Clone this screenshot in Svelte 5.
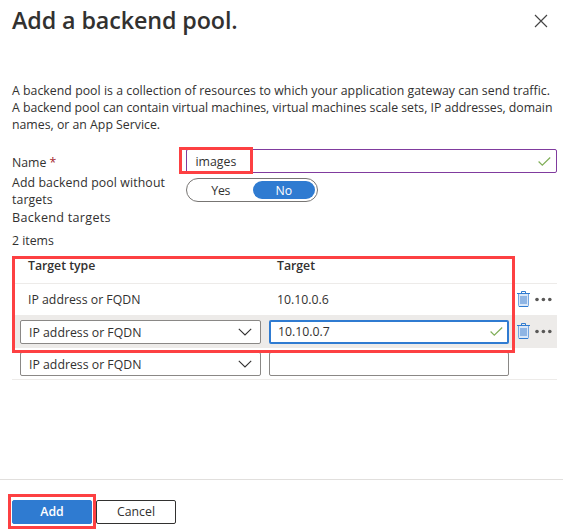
<script>
  const rows = [
    { target: '10.10.0.6', mode: 'read' },
    { target: '10.10.0.7', mode: 'active' },
    { target: '', mode: 'new' }
  ];
</script>

{#snippet check()}
  <svg class="check" width="13" height="9" viewBox="0 0 13 9"><path d="M.6 4.5 4.3 8.1 12.2.5" fill="none" stroke="#7fae57" stroke-width="1.2" /></svg>
{/snippet}

{#snippet actions()}
  <span class="actions">
    <svg width="13" height="17" viewBox="0 0 13 17">
      <path d="M1.5 3v11.5q0 1 1 1h8q1 0 1-1V3" fill="#d9e7f8" stroke="#73a5e0" stroke-width="1" />
      <path d="M3 5h7v8H3z" fill="#8fb5e4" />
      <path d="M0 2.5h13M4.5 2V.5h4V2M2 15.5h9" fill="none" stroke="#2f7bd1" />
    </svg>
    <svg width="17" height="5" viewBox="0 0 17 5" fill="#595857"><circle cx="2" cy="2.5" r="1.8" /><circle cx="8.4" cy="2.5" r="1.8" /><circle cx="14.8" cy="2.5" r="1.8" /></svg>
  </span>
{/snippet}

<div class="panel">
  <header>
    <h1>Add a backend pool.</h1>
    <svg width="14" height="14" viewBox="0 0 14 14"><path d="M1 1l12 12M13 1 1 13" stroke="#444" stroke-width="1.15" /></svg>
  </header>

  <div class="desc">
    <div class="d1">A backend pool is a collection of resources to which your application gateway can send traffic.</div>
    <div class="d2">A backend pool can contain virtual machines, virtual machines scale sets, IP addresses, domain</div>
    <div class="d3">names, or an App Service.</div>
  </div>

  <div class="form">
    <div class="labels">
      <div class="name">Name <b>*</b></div>
      <div class="without">Add backend pool without<br />targets</div>
      <div class="bt">Backend targets</div>
    </div>
    <div class="controls">
      <div class="field"><span class="img">images</span>{@render check()}<i class="mark mark-name"></i></div>
      <div class="toggle"><span class="yes">Yes</span><span class="on">No</span></div>
    </div>
  </div>
  <div class="count">2 items</div>

  <div class="table">
    <div class="row head"><span class="c1 tt">Target type</span><span class="th">Target</span></div>
    {#each rows as row}
      <div class="row {row.mode}">
        {#if row.mode === 'read'}
          <span class="c1 ip">IP address or FQDN</span><span class="c2 num">{row.target}</span>
        {:else}
          <div class="select"><span class="ip">IP address or FQDN</span><svg width="14" height="8" viewBox="0 0 14 8"><path d="M.8.8 7 7 13.2.8" fill="none" stroke="#323130" stroke-width="1.1" /></svg></div>
          <div class="input"><span class="num">{row.target}</span>{#if row.mode === 'active'}{@render check()}{/if}</div>
        {/if}
        {#if row.mode !== 'new'}{@render actions()}{/if}
      </div>
    {/each}
    <i class="mark mark-table"></i>
  </div>

  <footer>
    <div class="btn primary"><span>Add</span><i class="mark mark-add"></i></div>
    <div class="btn"><span class="cancel">Cancel</span></div>
  </footer>
</div>

<style>
  :global(body) { margin: 0; background: #fff; }
  .panel {
    width: 563px; height: 529px; box-sizing: border-box; overflow: hidden;
    display: flex; flex-direction: column; background: #fff; color: #323130;
    font: 12.3px/17px "Open Sans", "Noto Sans", sans-serif; white-space: nowrap;
  }
  .panel * { box-sizing: border-box; }
  header { height: 82px; padding: 4px 15px 0 12px; display: flex; justify-content: space-between; }
  h1 { margin: 0; font-size: 23.3px; line-height: 33px; font-weight: 570; letter-spacing: -.1px; }
  header svg { margin-top: 10px; }
  .desc { height: 67px; padding-left: 12px; }
  .d1 { letter-spacing: .03px; }
  .d2 { letter-spacing: -.025px; }
  .form { display: flex; height: 77px; padding-left: 12px; }
  .labels { width: 174px; padding-top: 5px; }
  .name { height: 20px; }
  .name b { color: #a4262c; font-weight: 400; }
  .without { letter-spacing: .11px; }
  .bt { margin-top: 1px; font-size: 12.6px; letter-spacing: .28px; }
  .controls { width: 371px; }
  .field { position: relative; height: 24px; border: 1px solid #803b9e; border-radius: 2px; display: flex; align-items: center; justify-content: space-between; padding: 0 5px 0 8.5px; }
  .toggle { margin-top: 5px; width: 132px; height: 24px; border: 1px solid #777573; border-radius: 12px; padding: 2px; display: flex; text-align: center; line-height: 19px; }
  .yes { width: 64px; letter-spacing: -.2px; }
  .on { width: 63px; height: 18px; border-radius: 9px; background: #2f7bd1; color: #fff; }
  .count { padding: 6px 0 0 12px; height: 30px; }
  .table { position: relative; margin-left: 12px; width: 545px; height: 124px; }
  .row { display: flex; align-items: center; height: 32px; border-bottom: 1px solid #edebe9; }
  .head { height: 28px; align-items: flex-start; padding-top: 1px; font-weight: 570; letter-spacing: -.02px; }
  .c1 { width: 265px; padding-left: 16px; flex: none; }
  .c2 { width: 238px; flex: none; }
  .active { background: #edebe9; }
  .active, .new { padding-left: 8px; }
  .select, .input { height: 24px; background: #fff; border: 1px solid #8a8886; border-radius: 2px; display: flex; align-items: center; justify-content: space-between; }
  .select { width: 241px; margin-right: 8px; padding: 0 8px; }
  .select .ip { padding-top: 2px; }
  .input { width: 240px; padding: 0 5px 0 8px; }
  .active .input { border: 2px solid #2f7bd1; padding: 0 4px 0 7px; }
  .actions { display: flex; align-items: center; gap: 5px; margin-left: 8px; }
  .read .actions { margin-left: 2px; }
  footer { margin-top: auto; height: 50px; border-top: 1px solid #e1dfdd; padding: 20px 12px 0; display: flex; gap: 4px; }
  .btn { position: relative; width: 80px; height: 24px; border: 1px solid #323130; border-radius: 2px; text-align: center; line-height: 22px; }
  .primary { background: #2f7bd1; border-color: #2f7bd1; color: #fff; font-weight: 600; }
  .mark { position: absolute; border: 3px solid #fd4042; pointer-events: none; }
  .mark-name { left: -8px; top: -3px; width: 74px; height: 27px; }
  .mark-table { left: 0; top: 0; width: 503px; height: 97px; }
  .mark-add { left: -5px; top: -7px; width: 88px; height: 35px; }
</style>
